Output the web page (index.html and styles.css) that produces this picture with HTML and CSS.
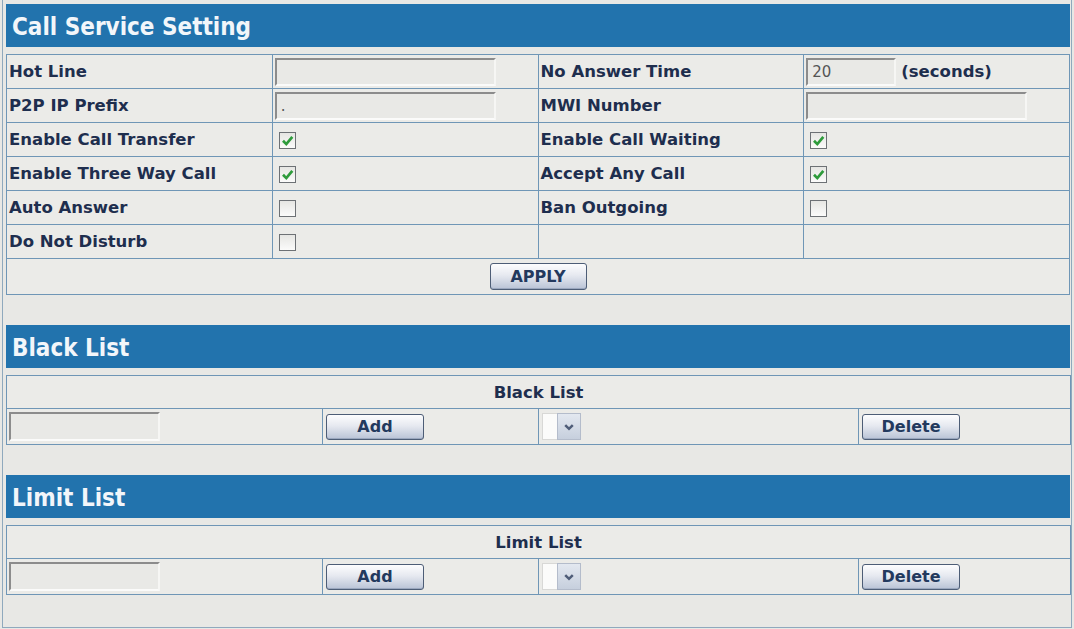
FILE: index.html
```html
<!DOCTYPE html>
<html lang="en">
<head>
    <meta charset="UTF-8">
    <meta name="viewport" content="width=device-width, initial-scale=1.0">
    <title>Call Service Setting</title>
    <link rel="stylesheet" href="styles.css">
</head>
<body>
    <div class="page">
        <section class="panel">
            <h2 class="panel-title">Call Service Setting</h2>
            <table class="grid settings">
                <tr>
                    <td class="label">Hot Line</td>
                    <td><input type="text" class="field" value=""></td>
                    <td class="label">No Answer Time</td>
                    <td><input type="text" class="field short" value="20"><span class="unit">(seconds)</span></td>
                </tr>
                <tr>
                    <td class="label">P2P IP Prefix</td>
                    <td><input type="text" class="field" value="."></td>
                    <td class="label">MWI Number</td>
                    <td><input type="text" class="field" value=""></td>
                </tr>
                <tr>
                    <td class="label">Enable Call Transfer</td>
                    <td><span class="check on"><svg viewBox="0 0 10 10"><path d="M2 5.2 L4.2 7.4 L8.2 2.6"/></svg></span></td>
                    <td class="label">Enable Call Waiting</td>
                    <td><span class="check on"><svg viewBox="0 0 10 10"><path d="M2 5.2 L4.2 7.4 L8.2 2.6"/></svg></span></td>
                </tr>
                <tr>
                    <td class="label">Enable Three Way Call</td>
                    <td><span class="check on"><svg viewBox="0 0 10 10"><path d="M2 5.2 L4.2 7.4 L8.2 2.6"/></svg></span></td>
                    <td class="label">Accept Any Call</td>
                    <td><span class="check on"><svg viewBox="0 0 10 10"><path d="M2 5.2 L4.2 7.4 L8.2 2.6"/></svg></span></td>
                </tr>
                <tr>
                    <td class="label">Auto Answer</td>
                    <td><span class="check"></span></td>
                    <td class="label">Ban Outgoing</td>
                    <td><span class="check"></span></td>
                </tr>
                <tr>
                    <td class="label">Do Not Disturb</td>
                    <td><span class="check"></span></td>
                    <td></td>
                    <td></td>
                </tr>
                <tr class="action-row">
                    <td colspan="4" class="center"><button type="button" class="btn apply">APPLY</button></td>
                </tr>
            </table>
        </section>

        <section class="panel">
            <h2 class="panel-title">Black List</h2>
            <table class="grid list">
                <colgroup>
                    <col class="c1"><col class="c2"><col class="c3"><col class="c4">
                </colgroup>
                <tr class="head-row">
                    <td colspan="4" class="center label">Black List</td>
                </tr>
                <tr class="ctrl-row">
                    <td><input type="text" class="field list-field" value=""></td>
                    <td><button type="button" class="btn">Add</button></td>
                    <td><span class="select"><span class="select-box"></span><span class="select-arrow"><svg viewBox="0 0 10 10"><path d="M2.3 3.6 L5 6.3 L7.7 3.6"/></svg></span></span></td>
                    <td><button type="button" class="btn">Delete</button></td>
                </tr>
            </table>
        </section>

        <section class="panel">
            <h2 class="panel-title">Limit List</h2>
            <table class="grid list">
                <colgroup>
                    <col class="c1"><col class="c2"><col class="c3"><col class="c4">
                </colgroup>
                <tr class="head-row">
                    <td colspan="4" class="center label">Limit List</td>
                </tr>
                <tr class="ctrl-row">
                    <td><input type="text" class="field list-field" value=""></td>
                    <td><button type="button" class="btn">Add</button></td>
                    <td><span class="select"><span class="select-box"></span><span class="select-arrow"><svg viewBox="0 0 10 10"><path d="M2.3 3.6 L5 6.3 L7.7 3.6"/></svg></span></span></td>
                    <td><button type="button" class="btn">Delete</button></td>
                </tr>
            </table>
        </section>
    </div>
</body>
</html>
```

FILE: styles.css
```css
body {
    margin: 0;
    background-color: #e8e8e5;
    font-family: "DejaVu Sans", Verdana, sans-serif;
    color: #1e2e4e;
}
.page {
    margin: 0 2px;
    padding: 4px 1px 0 3px;
    height: 628px;
    box-sizing: border-box;
    border: 1px solid #8fa9bd;
    border-top: none;
}
.panel + .panel {
    margin-top: 30px;
}
.panel-title {
    margin: 0;
    height: 43px;
    line-height: 39px;
    padding: 4px 0 0 6px;
    box-sizing: border-box;
    background-color: #2273ad;
    color: #f2f6fa;
    font-family: "DejaVu Sans Condensed", "DejaVu Sans", sans-serif;
    font-size: 24px;
    font-weight: bold;
}
.grid {
    width: 100%;
    margin-top: 7px;
    border-collapse: collapse;
    table-layout: fixed;
    background-color: #ebebe8;
}
.grid td {
    border: 1px solid #6f96b6;
    padding: 0 2px;
    height: 33px;
    white-space: nowrap;
}
.label {
    font-weight: bold;
    font-size: 16.5px;
    color: #1e2e4e;
}
.center {
    text-align: center;
}
.settings .action-row td {
    height: 35px;
}
.field {
    display: inline-block;
    vertical-align: middle;
    box-sizing: border-box;
    width: 221px;
    height: 28px;
    margin: 0;
    padding: 0 4px;
    border: 2px solid;
    border-color: #8c8c8c #f6f6f4 #fbfbfa #8c8c8c;
    background-color: #e9e9e6;
    font-family: "DejaVu Sans", sans-serif;
    font-size: 15px;
    color: #555;
}
.field.short {
    width: 90px;
}
.unit {
    margin-left: 5px;
    vertical-align: middle;
    font-weight: bold;
    font-size: 16.5px;
}
.check {
    display: inline-block;
    vertical-align: middle;
    box-sizing: border-box;
    width: 17px;
    height: 17px;
    margin-left: 4px;
    border: 1px solid #6d7175;
    background: linear-gradient(#e6e6e3, #fbfbfa);
}
.check svg {
    display: block;
    width: 15px;
    height: 15px;
    fill: none;
    stroke: #2e9b3b;
    stroke-width: 1.8;
}
.btn {
    height: 26px;
    padding: 0;
    border: 1px solid #4d5d76;
    border-radius: 3px;
    background: linear-gradient(#fdfdfe, #e6e9f0 45%, #b9c3d6);
    box-shadow: inset 0 -1px 0 #9aa7be;
    font-family: "DejaVu Sans", sans-serif;
    font-weight: bold;
    font-size: 16px;
    color: #23395e;
    width: 98px;
}
.btn.apply {
    width: 97px;
    height: 27px;
}
.list .c1 { width: 316px; }
.list .c2 { width: 216px; }
.list .c3 { width: 320px; }
.list .c4 { width: 212px; }
.list .head-row td {
    height: 32px;
}
.list .ctrl-row td {
    height: 35px;
}
.list-field {
    width: 151px;
    height: 29px;
}
.list .btn {
    margin-left: 1px;
}
.select {
    display: inline-flex;
    vertical-align: middle;
    height: 27px;
    margin-left: 1px;
}
.select-box {
    width: 14px;
    background-color: #fbfbfa;
    border: 1px solid #d8d8d6;
    border-right: none;
}
.select-arrow {
    width: 22px;
    display: flex;
    align-items: center;
    justify-content: center;
    background: linear-gradient(#e3e8f0, #c6cfdd);
    border: 1px solid #b4bccb;
}
.select-arrow svg {
    width: 14px;
    height: 14px;
    fill: none;
    stroke: #4f5d78;
    stroke-width: 1.8;
}
```
